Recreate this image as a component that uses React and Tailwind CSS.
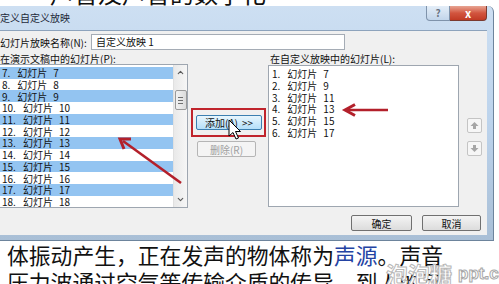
import { ChevronUp, ChevronDown } from "lucide-react";

const leftRows = [7, 8, 9, 10, 11, 12, 13, 14, 15, 16, 17, 18];
const rightRows = [7, 9, 11, 13, 15, 17];

const SlideItem = ({ index, num }) => (
  <>
    <span>{index}.</span>
    <span className="ml-[7px]">幻灯片</span>
    <span className="ml-[6px]">{num}</span>
  </>
);

const App = () => {
  return (
    <div className="relative w-[499px] h-[284px] overflow-hidden bg-white font-['Noto_Sans_CJK_SC',sans-serif] text-[#111]">
      {/* page text behind, top */}
      <div className="h-[6px] overflow-hidden pl-[50px]">
        <div className="-mt-[20px] text-[24px] leading-[26px] whitespace-nowrap">
          声音及声音的数字化
        </div>
      </div>

      {/* dialog window */}
      <div className="w-[494px] h-[235px] flex flex-col pr-[6px] pb-[5px] rounded-tr-[6px] bg-gradient-to-b from-[#cddff2] via-[#bcd3ec] to-[#a9bfd6] border-r border-b border-[#6d849c]">
        {/* title bar */}
        <div className="h-[24px] flex items-start justify-between">
          <div className="text-[10px] leading-[24px] text-[#1e2a3a] whitespace-nowrap">
            定义自定义放映
          </div>

          <div className="flex">
            <div className="w-[24px] h-[15px] flex items-center justify-center rounded-bl-[4px] border border-t-0 border-[#7f93ab] bg-gradient-to-b from-[#e4eef8] to-[#c2d5ea] text-[10px] leading-none text-[#6a7482] font-bold">
              ?
            </div>
            <div className="w-[37px] h-[15px] flex items-center justify-center rounded-br-[4px] border border-t-0 border-l-0 border-[#7a3a30] bg-gradient-to-b from-[#e7a493] via-[#d2553f] to-[#c13a24] text-[11px] leading-none text-white font-bold">
              x
            </div>
          </div>
        </div>

        {/* body */}
        <div className="flex-1 flex flex-col bg-[#f0f0f0] border-t border-[#8da3bc] text-[10px] leading-[11px]">
          {/* name row */}
          <div className="flex items-center mt-[3px] h-[16px]">
            <span className="w-[91px] whitespace-nowrap">幻灯片放映名称(N):</span>
            <div className="w-[254px] h-[16px] bg-white border border-[#a5acb5] pl-[4px] leading-[14px]">
              自定义放映 1
            </div>
          </div>

          {/* labels */}
          <div className="flex mt-[3px] h-[11px]">
            <span className="w-[270px] whitespace-nowrap">在演示文稿中的幻灯片(P):</span>
            <span className="whitespace-nowrap">在自定义放映中的幻灯片(L):</span>
          </div>

          {/* lists */}
          <div className="flex h-[144px]">
            {/* left list */}
            <div className="w-[188px] h-[144px] flex bg-white border-y border-r border-[#9ea6b0]">
              <div className="flex-1 pt-[2px]">
                {leftRows.map((n) => (
                  <div
                    key={n}
                    className={`h-[11.7px] flex items-center pl-[2px] whitespace-nowrap ${
                      n % 2 === 1 ? "bg-[#93c4f1]" : ""
                    }`}
                  >
                    <SlideItem index={n} num={n} />
                  </div>
                ))}
              </div>

              {/* scrollbar */}
              <div className="w-[14px] flex flex-col items-center bg-gradient-to-r from-[#e9e9e9] to-[#f6f6f6] border-l border-[#e0e0e0]">
                <ChevronUp size={9} strokeWidth={3} className="mt-[3px] text-[#5a5a5a]" />
                <div className="mt-[13px] w-[12px] h-[20px] flex flex-col items-center justify-center gap-[2px] rounded-[2px] border border-[#9a9a9a] bg-gradient-to-r from-[#f2f2f2] to-[#dcdcdc]">
                  <div className="w-[5px] h-px bg-[#6f6f6f]" />
                  <div className="w-[5px] h-px bg-[#6f6f6f]" />
                  <div className="w-[5px] h-px bg-[#6f6f6f]" />
                </div>
                <div className="flex-1" />
                <ChevronDown size={9} strokeWidth={3} className="mb-[3px] text-[#5a5a5a]" />
              </div>
            </div>

            {/* middle buttons */}
            <div className="w-[80px] flex flex-col">
              <div className="mt-[44px] ml-[3px] w-[75px] h-[29px] border-2 border-[#c0242c] flex items-center pl-[3px]">
                <div className="w-[66px] h-[15px] flex items-center justify-between px-[8px] rounded-[2px] border border-[#3c7fb1] bg-gradient-to-b from-[#e8f6fd] to-[#b4dffa] whitespace-nowrap">
                  <span>添加(A)</span>
                  <span>&gt;&gt;</span>
                </div>
              </div>
              <div className="mt-[4px] ml-[9px] w-[59px] h-[16px] flex items-center justify-center rounded-[2px] border border-[#b5b5b5] bg-[#f4f4f4] text-[#a0a0a0]">
                删除(R)
              </div>
            </div>

            {/* right list */}
            <div className="mt-[1px] w-[191px] h-[142px] bg-white border border-[#9ea6b0] pt-[2px]">
              {rightRows.map((n, i) => (
                <div key={n} className="h-[11.7px] flex items-center pl-[3px] whitespace-nowrap">
                  <SlideItem index={i + 1} num={n} />
                </div>
              ))}
            </div>

            {/* up / down */}
            <div className="flex-1 flex flex-col pl-[8px]">
              <div className="mt-[54px] w-[15px] h-[15px] flex items-center justify-center rounded-[2px] border border-[#c4c4c4] bg-[#f6f6f6]">
                <svg width="9" height="9" viewBox="0 0 9 9">
                  <path d="M4.5 1 L8.5 5 L6 5 L6 8 L3 8 L3 5 L0.5 5 Z" fill="#a6a6a6" />
                </svg>
              </div>
              <div className="mt-[8px] w-[15px] h-[15px] flex items-center justify-center rounded-[2px] border border-[#c4c4c4] bg-[#f6f6f6]">
                <svg width="9" height="9" viewBox="0 0 9 9">
                  <path d="M4.5 8 L8.5 4 L6 4 L6 1 L3 1 L3 4 L0.5 4 Z" fill="#a6a6a6" />
                </svg>
              </div>
            </div>
          </div>

          {/* ok / cancel */}
          <div className="flex justify-end gap-[10px] pr-[6px] mt-[7px]">
            <div className="w-[61px] h-[16px] flex items-center justify-center rounded-[2px] border border-[#707070] bg-gradient-to-b from-[#f4f4f4] to-[#dcdcdc]">
              确定
            </div>
            <div className="w-[59px] h-[16px] flex items-center justify-center rounded-[2px] border border-[#707070] bg-gradient-to-b from-[#f4f4f4] to-[#dcdcdc]">
              取消
            </div>
          </div>
        </div>
      </div>

      {/* page text below */}
      <div className="pl-[7px] text-[21.8px] leading-[27px] whitespace-nowrap">
        <div>
          体振动产生，正在发声的物体称为<span className="text-[#2443a3]">声源</span>。声音
        </div>
        <div>压力波通过空气等传输介质的传导，到人的耳</div>
      </div>

      {/* watermark */}
      <div className="absolute left-[386px] top-[260px] flex items-end gap-[6px] whitespace-nowrap">
        <span className="text-[22px] leading-[26px] font-bold text-white [-webkit-text-stroke:1px_#b8b8b8]">
          泡泡糖
        </span>
        <span className="text-[17px] leading-[24px] font-bold text-white [-webkit-text-stroke:1px_#a8a8a8] font-['Liberation_Sans',sans-serif]">
          ppt.cn
        </span>
      </div>

      {/* red arrows + cursor drawn over the dialog */}
      <svg
        className="absolute inset-0 pointer-events-none"
        width="499"
        height="284"
        viewBox="0 0 499 284"
      >
        <line x1="181" y1="183" x2="123" y2="141" stroke="#b3202b" strokeWidth="2.6" />
        <polyline
          points="124,149 120,139 131,139"
          fill="none"
          stroke="#b3202b"
          strokeWidth="3"
          strokeLinejoin="miter"
        />
        <line x1="388" y1="110" x2="346" y2="110" stroke="#b3202b" strokeWidth="2.6" />
        <polyline
          points="355,104.5 345,110 355,115.5"
          fill="none"
          stroke="#b3202b"
          strokeWidth="3"
        />
        <path
          d="M229 120 L229 136 L233 132.5 L236 139 L238.5 138 L235.5 131.5 L240.5 131.5 Z"
          fill="#fff"
          stroke="#000"
          strokeWidth="1"
          strokeLinejoin="round"
        />
      </svg>
    </div>
  );
};

export default App;
